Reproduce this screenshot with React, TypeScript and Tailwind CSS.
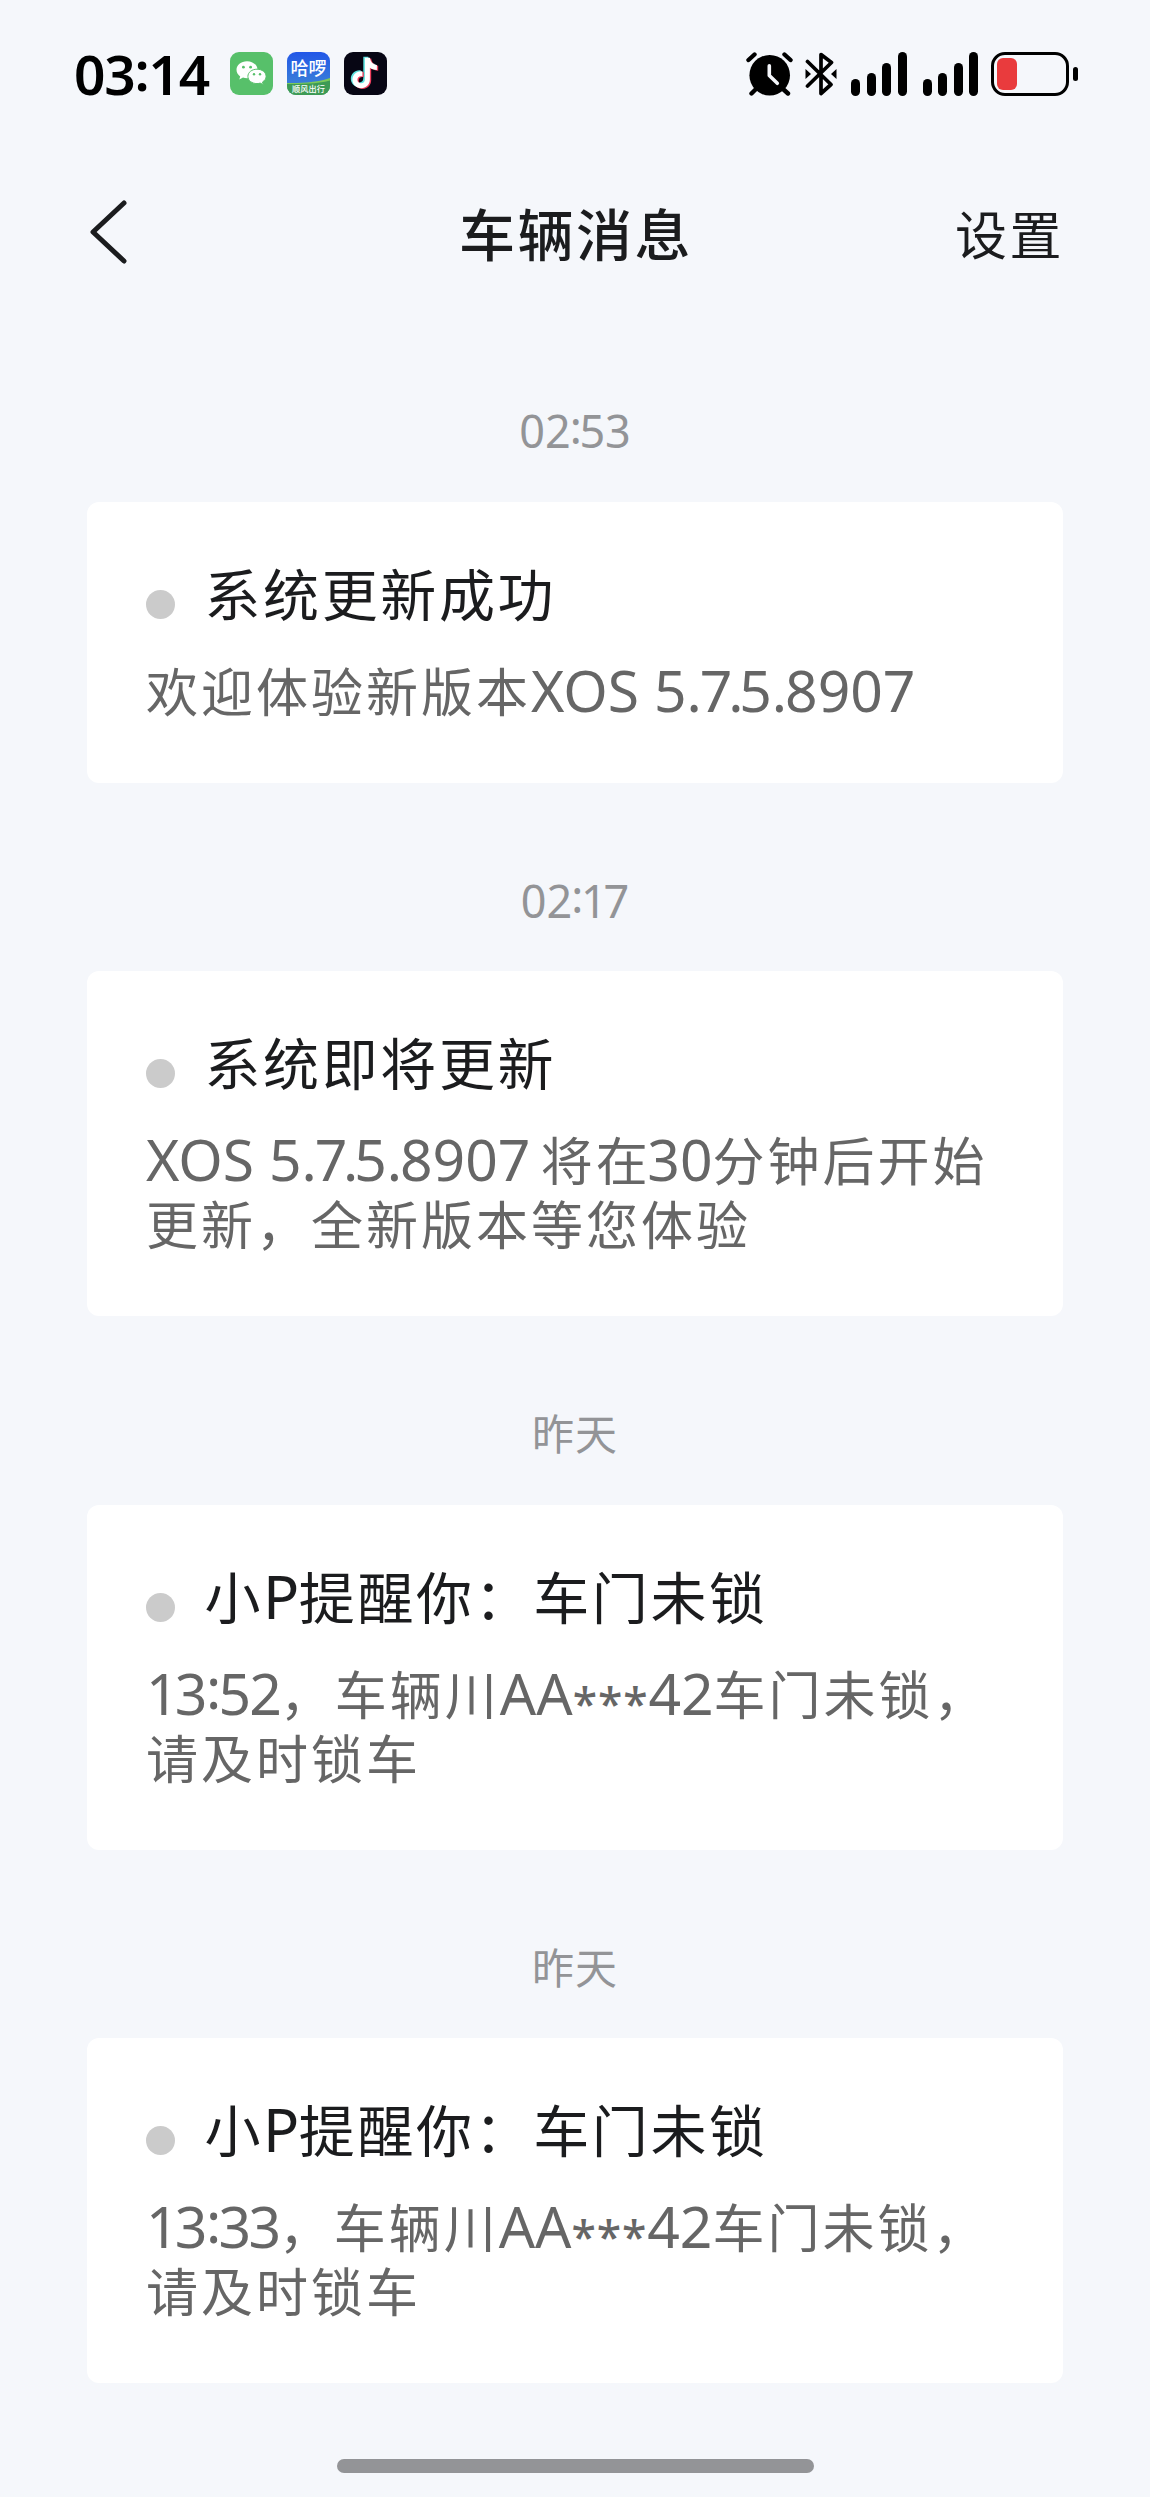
import React from 'react';

interface Message {
  time: string;
  title: string;
  lines: string[];
}

const messages: Message[] = [
  { time: '02:53', title: '系统更新成功', lines: ['欢迎体验新版本XOS 5.7.5.8907'] },
  { time: '02:17', title: '系统即将更新', lines: ['XOS 5.7.5.8907 将在30分钟后开始', '更新，全新版本等您体验'] },
  { time: '昨天', title: '小P提醒你：车门未锁', lines: ['13:52，车辆川AA***42车门未锁，', '请及时锁车'] },
  { time: '昨天', title: '小P提醒你：车门未锁', lines: ['13:33，车辆川AA***42车门未锁，', '请及时锁车'] },
];

// Spacing corrections for single glyphs inside a Latin run
const glyphClass: Record<string, string> = {
  ':': 'ml-[-0.02em] align-[0.09em] tracking-[-0.05em]',
  '***': 'align-[-0.12em] text-[0.78em] tracking-[0.02em] font-medium',
  '1': 'tracking-[-0.07em]',
  '.': 'tracking-[-0.035em]',
  '7.': 'tracking-[-0.075em]',
  '7 ': 'tracking-[-0.04em]',
  '30': 'ml-[-0.06em]',
  '52': 'tracking-[-0.035em]',
  '33': 'tracking-[-0.045em]',
};

// Latin letters and digits are set a little larger than the Chinese around them
function Mixed({ text, latin }: { text: string; latin: string }) {
  return (
    <>
      {text.split(/([\x20-\x7e]+)/).map((run, i) =>
        i % 2 === 1 ? (
          <span key={i} className={`leading-[0] ${latin}`}>
            {run.split(/(:|\*+|1|30|52|33|7\.|7 |\.)/).map((part, j) =>
              glyphClass[part] ? <span key={j} className={glyphClass[part]}>{part}</span> : part
            )}
          </span>
        ) : (
          run
        )
      )}
    </>
  );
}

function WeChatIcon() {
  return (
    <svg viewBox="0 0 43 43" className="h-[43px] w-[43px]">
      <rect width="43" height="43" rx="9" fill="#57c06a" />
      <path d="M17 9.200c-6 0-10.500 3.800-10.500 8.600 0 2.700 1.400 5 3.700 6.600l-.9 3.100 3.700-1.900c1.300.4 2.600.6 4 .6 6 0 10.500-3.700 10.500-8.400S23 9.200 17 9.200z" fill="#fff" />
      <path d="M27 17.200c-5.100 0-9.100 3.100-9.100 7.200s4 7.200 9.100 7.200c1.100 0 2.200-.2 3.200-.5l3.100 1.600-.8-2.700c2.200-1.300 3.600-3.300 3.600-5.600 0-4.100-4-7.200-9.100-7.200z" fill="#fff" stroke="#57c06a" strokeWidth="1" />
      <g fill="#57c06a">
        <circle cx="13.400" cy="15.200" r="1.400" />
        <circle cx="20.600" cy="15.200" r="1.400" />
        <circle cx="24" cy="22.200" r="1.200" />
        <circle cx="30" cy="22.200" r="1.200" />
      </g>
    </svg>
  );
}

function HelloIcon() {
  return (
    <svg viewBox="0 0 43 43" className="h-[43px] w-[43px]">
      <defs>
        <linearGradient id="hello-sky" x1="0" y1="0" x2="0" y2="1">
          <stop offset="0" stopColor="#2257e8" />
          <stop offset="0.75" stopColor="#3a7fd8" />
        </linearGradient>
        <clipPath id="hello-clip">
          <rect width="43" height="43" rx="9" />
        </clipPath>
      </defs>
      <g clipPath="url(#hello-clip)">
        <rect width="43" height="43" fill="url(#hello-sky)" />
        <path d="M0 31c12 0 28 0 43-5v17H0z" fill="#7cc95a" />
        <path d="M0 32c14 0 30 0 43-3.500V43H0z" fill="#3d9a55" />
      </g>
      <text x="21.500" y="23" textAnchor="middle" fontSize="18" fontWeight="500" fill="#fff">哈啰</text>
      <text x="21.500" y="40" textAnchor="middle" fontSize="8.200" fontWeight="500" fill="#fff">顺风出行</text>
    </svg>
  );
}

function DouyinIcon() {
  const note = 'M20 5.500h5c.6 4.200 3 6.700 7 7.200v5c-2.700 0-5-.8-7-2.200v11.500c0 5.500-4 9-8.700 9-5 0-8.800-3.700-8.800-8.500 0-5.300 4.500-9.200 10-8.400v5.200c-2.700-.8-5 .8-5 3.300 0 2 1.600 3.500 3.700 3.500 2.300 0 3.800-1.600 3.800-4.100z';
  return (
    <svg viewBox="0 0 43 43" className="h-[43px] w-[43px]">
      <rect width="43" height="43" rx="9" fill="#070614" />
      <path d={note} fill="#5fe3e0" transform="translate(-.7 -.7)" />
      <path d={note} fill="#f0405f" transform="translate(2.200 1)" />
      <path d={note} fill="#fff" transform="translate(.9 .2)" />
    </svg>
  );
}

function AlarmIcon() {
  return (
    <svg viewBox="0 0 47 44" className="h-[44px] w-[47px]">
      <g stroke="#000" strokeLinecap="round" strokeWidth="4.400">
        <path d="M2.500 8L8.500 2.500M44.500 8L38.500 2.500M5.500 41.500L10 37M42 41.500L37 37" />
      </g>
      <circle cx="23.700" cy="23.200" r="20.300" fill="#000" />
      <path d="M23.300 13.700V23.500l8 7.800" fill="none" stroke="#f5f7fb" strokeWidth="3.600" strokeLinecap="round" strokeLinejoin="round" />
    </svg>
  );
}

function BluetoothIcon() {
  return (
    <svg viewBox="0 0 32 44" className="h-[44px] w-[32px]">
      <path d="M2.500 9.500L26 32.500 16 41.500V2.500L26.500 10.500 2.500 34" fill="none" stroke="#000" strokeWidth="3.700" strokeLinecap="round" strokeLinejoin="round" />
      <path d="M.5 17l5.500 5-5.500 5zM31.500 17l-5.500 5 5.500 5z" fill="#000" />
    </svg>
  );
}

function SignalIcon() {
  return (
    <div className="flex h-[44px] items-end gap-[6.500px]">
      <div className="h-[17px] w-[9px] rounded-full bg-black" />
      <div className="h-[23px] w-[9px] rounded-full bg-black" />
      <div className="h-[33px] w-[9px] rounded-full bg-black" />
      <div className="h-[44px] w-[9px] rounded-full bg-black" />
    </div>
  );
}

function StatusBar() {
  return (
    <div className="flex h-[148px] items-start pt-[52px] pr-[72px] pl-[74px]">
      <div className="h-[44px] w-[156px] font-['Noto_Sans'] text-[55px] leading-[44px] font-semibold tracking-[-1.200px] text-black">
        03<span className="align-[4px] leading-[0]">:</span>14
      </div>
      <div className="flex gap-[14px]">
        <WeChatIcon />
        <HelloIcon />
        <DouyinIcon />
      </div>
      <div className="ml-auto flex">
        <AlarmIcon />
        <div className="ml-[12px]"><BluetoothIcon /></div>
        <div className="ml-[14.500px]"><SignalIcon /></div>
        <div className="ml-[16px]"><SignalIcon /></div>
        <div className="ml-[13px] flex items-center gap-[4px]">
          <div className="h-[44px] w-[78px] rounded-[14px] border-[3px] border-black p-[3px]">
            <div className="h-[32px] w-[20px] rounded-[6px] bg-[#e93b3d]" />
          </div>
          <div className="h-[14px] w-[5px] rounded-full bg-black" />
        </div>
      </div>
    </div>
  );
}

function NavBar() {
  return (
    <header className="grid h-[170px] grid-cols-3 items-start pr-[86px] pl-[88px] text-[#1b1c1e]">
      <svg viewBox="0 0 40 66" className="mt-[51px] h-[66px] w-[40px]" fill="none" stroke="#1b1c1e" strokeWidth="5">
        <path d="M36 4L5 33l31 29" strokeLinecap="round" strokeLinejoin="round" />
      </svg>
      <h1 className="mt-[46px] text-center text-[56px] leading-[80px] font-medium tracking-[2.500px] whitespace-nowrap">车辆消息</h1>
      <button className="mt-[47px] text-right text-[52px] leading-[80px] tracking-[2.500px]">设置</button>
    </header>
  );
}

function MessageCard({ message }: { message: Message }) {
  return (
    <section className="pt-[83px]">
      <div className="h-[105.500px] text-center text-[42px] leading-[70px] tracking-[1px] text-[#939497]">
        <Mixed text={message.time} latin="align-[-1px] text-[45px] tracking-[-0.100px]" />
      </div>
      <div className="rounded-[12px] bg-white px-[59px] pt-[52px] pb-[59px]">
        <div className="flex h-[80px] items-center">
          <span className="mt-[21px] mr-[29.500px] h-[29px] w-[29px] shrink-0 rounded-full bg-[#cbcbcb]" />
          <h2 className="text-[56px] leading-[80px] tracking-[2.600px] text-[#1b1c1e]">
            <Mixed text={message.title} latin="text-[60px] tracking-[-0.600px]" />
          </h2>
        </div>
        <div className="pt-[26px] text-[52px] tracking-[3px] text-[#666]">
          {message.lines.map((line) => (
            <p key={line} className="h-[64px] leading-[64px] whitespace-nowrap">
              <Mixed text={line} latin="text-[57px] tracking-normal" />
            </p>
          ))}
        </div>
      </div>
    </section>
  );
}

export default function App() {
  return (
    <div className="flex h-[2497px] w-[1150px] flex-col overflow-hidden bg-[#f5f7fb] font-['Noto_Sans','Noto_Sans_CJK_SC',sans-serif]">
      <StatusBar />
      <NavBar />
      <main className="mt-[-5px] flex-1 px-[87px]">
        {messages.map((message, i) => (
          <MessageCard key={i} message={message} />
        ))}
      </main>
      <div className="mx-auto mb-[24px] h-[14px] w-[477px] shrink-0 rounded-full bg-[#939497]" />
    </div>
  );
}
